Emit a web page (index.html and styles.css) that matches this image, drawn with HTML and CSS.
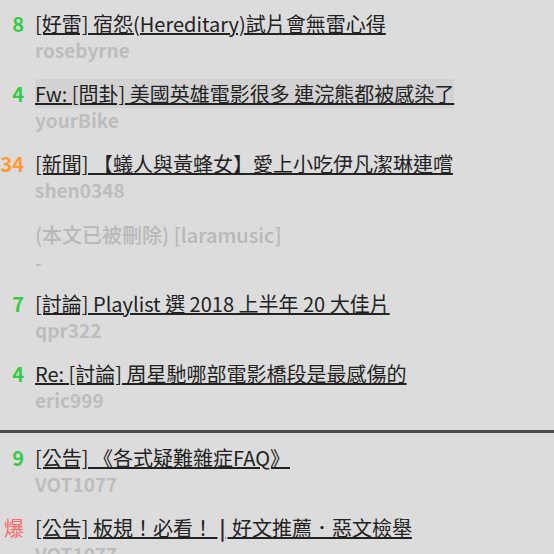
FILE: index.html
```html
<!DOCTYPE html>
<html lang="zh-Hant">
<head>
<meta charset="utf-8">
<link rel="stylesheet" href="styles.css">
</head>
<body>
<div class="list">
  <div class="row">
    <div class="nrec green">8</div>
    <div class="main">
      <div class="title"><a href="#">[好雷] 宿怨(Hereditary)試片會無雷心得</a></div>
      <div class="author">rosebyrne</div>
    </div>
  </div>
  <div class="row">
    <div class="nrec green">4</div>
    <div class="main">
      <div class="title"><a href="#" class="hover">Fw: [問卦] 美國英雄電影很多 連浣熊都被感染了</a></div>
      <div class="author">yourBike</div>
    </div>
  </div>
  <div class="row">
    <div class="nrec orange">34</div>
    <div class="main">
      <div class="title"><a href="#">[新聞] 【蟻人與黃蜂女】愛上小吃伊凡潔琳連嚐</a></div>
      <div class="author">shen0348</div>
    </div>
  </div>
  <div class="row">
    <div class="nrec"></div>
    <div class="main">
      <div class="title deleted">(本文已被刪除) [laramusic]</div>
      <div class="author">-</div>
    </div>
  </div>
  <div class="row">
    <div class="nrec green">7</div>
    <div class="main">
      <div class="title"><a href="#">[討論] Playlist 選 2018 上半年 20 大佳片</a></div>
      <div class="author">qpr322</div>
    </div>
  </div>
  <div class="row">
    <div class="nrec green">4</div>
    <div class="main">
      <div class="title"><a href="#">Re: [討論] 周星馳哪部電影橋段是最感傷的</a></div>
      <div class="author">eric999</div>
    </div>
  </div>
  <div class="sep"></div>
  <div class="row">
    <div class="nrec green">9</div>
    <div class="main">
      <div class="title"><a href="#">[公告] 《各式疑難雜症FAQ》</a></div>
      <div class="author">VOT1077</div>
    </div>
  </div>
  <div class="row">
    <div class="nrec red">爆</div>
    <div class="main">
      <div class="title"><a href="#">[公告] 板規！必看！ <span class="bar">|</span> 好文推薦．惡文檢舉</a></div>
      <div class="author">VOT1077</div>
    </div>
  </div>
</div>
</body>
</html>
```
FILE: styles.css
```css
html, body {
  margin: 0;
  padding: 0;
  background: #dcdcdc;
}
body {
  font-family: "Noto Sans CJK TC", "Noto Sans", sans-serif;
  overflow: hidden;
}
.list {
  padding-top: 12px;
}
.row {
  display: flex;
  align-items: flex-start;
  height: 70px;
}
.nrec {
  width: 24px;
  text-align: right;
  font-size: 20px;
  line-height: 24px;
  font-weight: bold;
  flex: none;
}
.green { color: #33cc44; }
.orange { color: #ff9933; }
.red { color: #ff6666; font-weight: normal; }
.main {
  margin-left: 11px;
  min-width: 0;
  white-space: nowrap;
}
.title {
  font-size: 20px;
  line-height: 24px;
}
.title a {
  color: #222;
  text-decoration: underline;
}
.title a.hover {
  background: #d2d2d2;
}
.bar {
  font-weight: bold;
  margin: 0 2px;
}
.deleted {
  color: #b8b8b8;
  font-weight: 500;
  line-height: 26px;
}
.author {
  font-size: 19px;
  line-height: 24px;
  margin-top: 2px;
  font-weight: bold;
  color: #bdbdbd;
}
.sep {
  height: 3px;
  background: #4d4d4d;
  margin: -2px 0 13px;
}
```
